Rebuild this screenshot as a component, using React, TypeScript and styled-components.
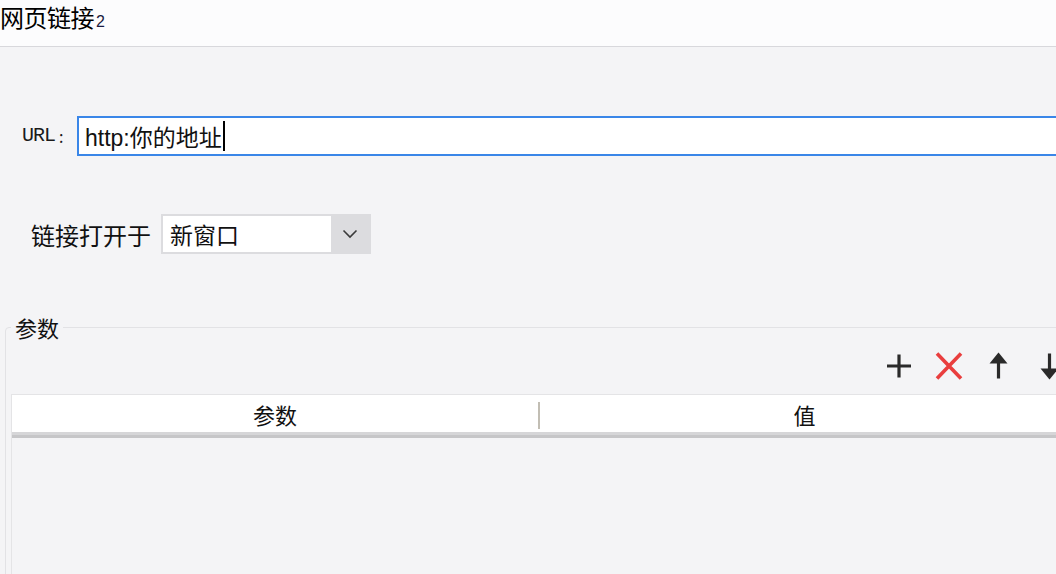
import React from 'react'
import styled, { createGlobalStyle } from 'styled-components'

const GlobalStyle = createGlobalStyle`
  html, body {
    margin: 0;
    padding: 0;
    background: #f4f4f6;
    overflow: hidden;
  }
  * {
    box-sizing: border-box;
  }
`

const cjk = `"Noto Sans CJK SC", "Noto Sans", sans-serif`

const Page = styled.div`
  width: 1056px;
  height: 574px;
  overflow: hidden;
  background: #f4f4f6;
  font-family: "Liberation Sans", ${cjk};
  color: #111;
`

const TitleBar = styled.div`
  height: 47px;
  background: #fcfcfd;
  border-bottom: 1px solid #d8d8dc;
  display: flex;
  align-items: flex-start;
  padding-top: 2px;
`

const Title = styled.h1`
  margin: 0;
  font-family: ${cjk};
  font-weight: 400;
  font-size: 24px;
  line-height: 30px;
  color: #000;
  letter-spacing: -0.5px;
`

const TitleNumber = styled.span`
  font-family: "Liberation Sans", sans-serif;
  font-size: 16px;
  color: #1a1a40;
  margin-left: 2px;
`

const Row = styled.div<{ top: number; indent: number }>`
  display: flex;
  align-items: center;
  margin-top: ${({ top }) => top}px;
  padding-left: ${({ indent }) => indent}px;
  width: 1120px;
`

const UrlLabel = styled.span`
  width: 55px;
  display: flex;
  align-items: center;
  color: #1a1a1a;
`

const UrlText = styled.span`
  font-family: "Liberation Mono", "DejaVu Sans Mono", monospace;
  font-size: 20px;
  letter-spacing: -1px;
  line-height: 1;
`

const Colon = styled.span`
  font-family: ${cjk};
  font-size: 16px;
  margin-left: 4px;
`

const UrlField = styled.div`
  flex: 1;
  height: 40px;
  background: #fff;
  border: 2px solid #3a86e8;
  display: flex;
  align-items: center;
  padding-left: 6px;
  font-family: "Liberation Sans", ${cjk};
  font-size: 23px;
  color: #111;
`

const Caret = styled.span`
  display: inline-block;
  width: 2px;
  height: 30px;
  background: #000;
  margin-left: 1px;
`

const OpenLabel = styled.span`
  font-family: ${cjk};
  font-size: 24px;
  color: #111;
  margin-right: 10px;
`

const Select = styled.div`
  width: 210px;
  height: 40px;
  border: 2px solid #dcdcdf;
  background: #fff;
  display: flex;
  align-items: stretch;
`

const SelectValue = styled.div`
  flex: 1;
  display: flex;
  align-items: center;
  padding-left: 7px;
  font-family: ${cjk};
  font-size: 23px;
  color: #111;
`

const SelectButton = styled.div`
  width: 38px;
  background: #dcdcdf;
  display: flex;
  align-items: center;
  justify-content: center;
`

const Group = styled.fieldset`
  margin: 60px 0 0 5px;
  width: 1067px;
  height: 300px;
  border: 1px solid #e2e2e5;
  border-radius: 4px;
  padding: 0 0 0 5px;
  min-width: 0;
`

const Legend = styled.legend`
  font-family: ${cjk};
  font-size: 22px;
  line-height: 26px;
  padding: 0 4px;
  color: #111;
`

const Toolbar = styled.div`
  display: flex;
  justify-content: flex-end;
  gap: 22px;
  margin-top: 12px;
  padding-right: 8px;
`

const IconButton = styled.button`
  width: 28px;
  height: 28px;
  padding: 0;
  border: none;
  background: transparent;
  display: flex;
  align-items: center;
  justify-content: center;
`

const Table = styled.div`
  margin-top: 14px;
  border-left: 1px solid #e4e4e6;
  height: 300px;
`

const HeaderRow = styled.div`
  display: grid;
  grid-template-columns: 526px 1fr;
  height: 44px;
  background: #fff;
  border-top: 1px solid #e4e4e6;
  border-bottom: 3px solid #c6c6c8;
  box-shadow: inset 0 -3px 0 #d6d6d8;
`

const HeaderCell = styled.div<{ divider?: boolean }>`
  position: relative;
  display: flex;
  align-items: center;
  justify-content: center;
  font-family: ${cjk};
  font-size: 22px;
  color: #111;
  padding-bottom: 2px;
  ${({ divider }) =>
    divider &&
    `
    &::before {
      content: '';
      position: absolute;
      left: 0;
      top: 7px;
      width: 2px;
      height: 27px;
      background: #c2beb4;
    }
  `}
`

const PlusIcon = () => (
  <svg width="28" height="28" viewBox="0 0 28 28">
    <path d="M14 2.5v23M2 14h24" stroke="#2a2a2a" strokeWidth="3.2" fill="none" />
  </svg>
)

const DeleteIcon = () => (
  <svg width="28" height="28" viewBox="0 0 28 28">
    <path d="M2 1.5l24 25M26 1.5l-24 25" stroke="#e93e3e" strokeWidth="3.6" fill="none" />
  </svg>
)

const ArrowIcon = ({ down }: { down?: boolean }) => (
  <svg width="28" height="28" viewBox="0 0 28 28" style={down ? { transform: 'rotate(180deg)' } : undefined}>
    <path d="M13.5 26.5V9" stroke="#2a2a2a" strokeWidth="3.2" fill="none" />
    <path d="M13.5 0.5L4.5 11.5h18z" fill="#2a2a2a" />
  </svg>
)

const Chevron = () => (
  <svg width="16" height="10" viewBox="0 0 16 10">
    <path d="M1.5 1.5l6.5 6.5 6.5-6.5" stroke="#3a3a3a" strokeWidth="1.6" fill="none" />
  </svg>
)

export default function App() {
  return (
    <Page>
      <GlobalStyle />
      <TitleBar>
        <Title>
          网页链接<TitleNumber>2</TitleNumber>
        </Title>
      </TitleBar>

      <Row top={69} indent={22}>
        <UrlLabel>
          <UrlText>URL</UrlText>
          <Colon>:</Colon>
        </UrlLabel>
        <UrlField>
          http:你的地址<Caret />
        </UrlField>
      </Row>

      <Row top={58} indent={31}>
        <OpenLabel>链接打开于</OpenLabel>
        <Select>
          <SelectValue>新窗口</SelectValue>
          <SelectButton>
            <Chevron />
          </SelectButton>
        </Select>
      </Row>

      <Group>
        <Legend>参数</Legend>
        <Toolbar>
          <IconButton title="添加">
            <PlusIcon />
          </IconButton>
          <IconButton title="删除">
            <DeleteIcon />
          </IconButton>
          <IconButton title="上移">
            <ArrowIcon />
          </IconButton>
          <IconButton title="下移">
            <ArrowIcon down />
          </IconButton>
        </Toolbar>
        <Table>
          <HeaderRow>
            <HeaderCell>参数</HeaderCell>
            <HeaderCell divider>值</HeaderCell>
          </HeaderRow>
        </Table>
      </Group>
    </Page>
  )
}
